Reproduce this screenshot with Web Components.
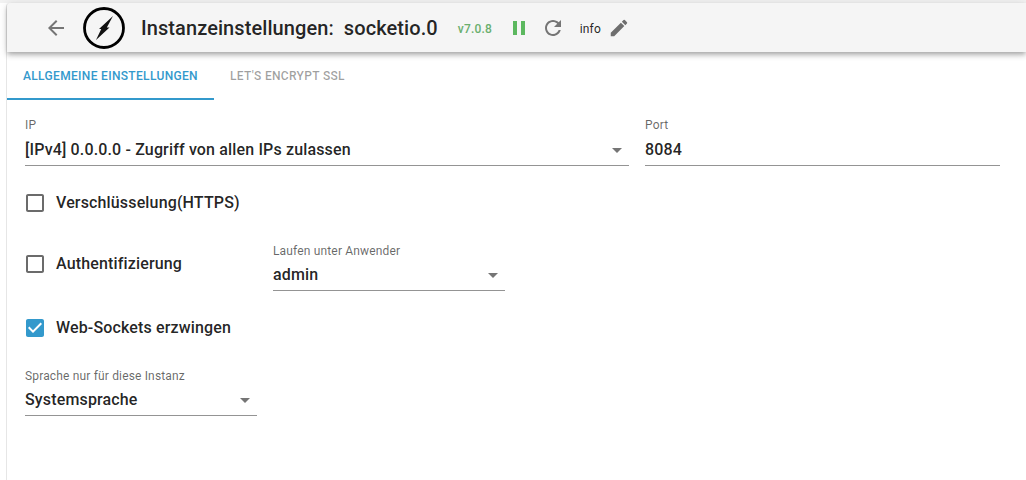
<!DOCTYPE html>
<html lang="de"><head><meta charset="utf-8"><title>Instanzeinstellungen</title>
<style>html,body{margin:0;padding:0;background:#fff;height:100%;overflow:hidden;font-family:Roboto,"Liberation Sans",sans-serif;color:rgba(0,0,0,.87)}</style>
</head><body>
<settings-page>
  <app-bar slot="bar" title-text="Instanzeinstellungen:" instance="socketio.0" version="v7.0.8" log="info"></app-bar>
  <tab-bar slot="tabs"><tab-item active>Allgemeine Einstellungen</tab-item><tab-item>Let's Encrypt SSL</tab-item></tab-bar>
  <form-row style="--gap:16px;--mt:18px;--h:48px;--lp:0px;--vm:8px">
    <select-field label="IP" value="[IPv4] 0.0.0.0 - Zugriff von allen IPs zulassen" style="width:604px"></select-field>
    <text-field label="Port" value="8084" style="width:355px"></text-field>
  </form-row>
  <form-row style="--mt:25px;--h:24px"><check-box label="Verschlüsselung(HTTPS)"></check-box></form-row>
  <form-row style="--mt:28px;--h:48px;--gap:0px">
    <check-box label="Authentifizierung" style="width:248px;margin-bottom:6px"></check-box>
    <select-field label="Laufen unter Anwender" value="admin" style="width:232px"></select-field>
  </form-row>
  <form-row style="--mt:25px;--h:24px"><check-box label="Web-Sockets erzwingen" checked></check-box></form-row>
  <form-row style="--mt:28px;--h:48px"><select-field label="Sprache nur für diese Instanz" value="Systemsprache" style="width:232px"></select-field></form-row>
</settings-page>
<script>
function def(name, html){
  customElements.define(name, class extends HTMLElement{
    connectedCallback(){
      if(this.shadowRoot) return;
      const r=this.attachShadow({mode:'open'});
      r.innerHTML=typeof html==='function'?html(this):html;
    }
  });
}
def('settings-page',`<style>
:host{display:block;height:480px;padding-top:3px;box-sizing:border-box;background:linear-gradient(#f2f2f2,#f2f2f2) top/100% 3px no-repeat #fff}
.frame{margin-left:6px;height:100%;box-sizing:border-box;border-left:1px solid #e6e6e6;border-top-left-radius:4px;display:flex;flex-direction:column}
.body{padding-left:18px;display:flex;flex-direction:column}
</style><div class="frame"><slot name="bar"></slot><slot name="tabs"></slot><div class="body"><slot></slot></div></div>`);
def('app-bar',h=>`<style>
:host{display:flex;align-items:center;height:49px;background:#f5f5f5;box-shadow:0 2px 4px -1px rgba(0,0,0,.2),0 4px 5px 0 rgba(0,0,0,.14),0 1px 10px 0 rgba(0,0,0,.12);position:relative;z-index:1;border-top-left-radius:4px;padding-left:37px;box-sizing:border-box}
svg{display:block;flex:none}
.title{font-size:20px;font-weight:500;line-height:24px;white-space:pre;margin-left:15px;letter-spacing:.08px;color:rgba(0,0,0,.87)}
.ver{font-size:12px;font-weight:500;color:#6aaf6e;margin-left:20px;letter-spacing:.2px;margin-top:2px}
.log{font-size:12px;color:rgba(0,0,0,.87);margin-left:15px;margin-top:2px;letter-spacing:.2px}
</style>
<svg width="24" height="24" viewBox="0 0 24 24" fill="#757575"><path d="M20 11H7.83l5.59-5.59L12 4l-8 8 8 8 1.41-1.41L7.83 13H20v-2z"/></svg>
<svg width="44" height="44" viewBox="0 0 44 44" style="margin-left:14px"><circle cx="22" cy="22" r="19.5" fill="none" stroke="#000" stroke-width="2.8"/><path d="M31 10 L17 23 L24 23 Z M14 34 L27.5 21.5 L20 21.5 Z" fill="#111"/></svg>
<span class="title">${h.getAttribute('title-text')}  ${h.getAttribute('instance')}</span>
<span class="ver">${h.getAttribute('version')}</span>
<svg width="24" height="24" viewBox="0 0 24 24" fill="#5cb85f" style="margin-left:14.6px"><path d="M6 5h4v14H6zM14 5h4v14h-4z"/></svg>
<svg width="24" height="24" viewBox="0 0 24 24" fill="#757575" style="margin-left:10px"><path d="M17.65 6.35C16.2 4.9 14.21 4 12 4c-4.42 0-7.99 3.58-7.99 8s3.57 8 7.99 8c3.73 0 6.84-2.55 7.73-6h-2.08c-.82 2.33-3.04 4-5.65 4-3.31 0-6-2.69-6-6s2.69-6 6-6c1.66 0 3.14.69 4.22 1.78L13 11h7V4l-2.35 2.35z"/></svg>
<span class="log">${h.getAttribute('log')}</span>
<svg width="22" height="22" viewBox="0 0 24 24" fill="#6e6e6e" style="margin-left:7px"><path d="M3 17.25V21h3.75L17.81 9.94l-3.75-3.75L3 17.25zM20.71 7.04c.39-.39.39-1.02 0-1.41l-2.34-2.34a.9959.9959 0 0 0-1.41 0l-1.83 1.83 3.75 3.75 1.83-1.83z"/></svg>`);
def('tab-bar',`<style>:host{display:flex;height:48px}</style><slot></slot>`);
def('tab-item',`<style>
:host{display:flex;align-items:center;height:48px;box-sizing:border-box;padding:0 16px;font-size:12px;font-weight:500;text-transform:uppercase;letter-spacing:.33px;color:rgba(0,0,0,.38);white-space:nowrap}
:host([active]){color:#3399cc;border-bottom:2px solid #3399cc;padding-top:2px}
</style><slot></slot>`);
def('form-row',`<style>:host{display:flex;align-items:center;gap:var(--gap,0);margin-top:var(--mt,0);height:var(--h,48px)}</style><slot></slot>`);
const fieldCss=`:host{display:block;height:48px;box-sizing:border-box;position:relative;border-bottom:1px solid #949494;flex:none}
.l{font-size:12px;line-height:14px;color:rgba(0,0,0,.6);white-space:nowrap;padding-top:var(--lp,1px);letter-spacing:.16px}
.v{font-size:16px;font-weight:500;line-height:19px;margin-top:var(--vm,7px);white-space:nowrap;letter-spacing:.15px;color:rgba(0,0,0,.87)}`;
def('select-field',h=>`<style>${fieldCss}
.a{position:absolute;right:7px;top:30px;width:0;height:0;border-left:5px solid transparent;border-right:5px solid transparent;border-top:5px solid #757575}</style>
<div class="l">${h.getAttribute('label')}</div><div class="v">${h.getAttribute('value')}</div><span class="a"></span>`);
def('text-field',h=>`<style>${fieldCss}</style><div class="l">${h.getAttribute('label')}</div><div class="v">${h.getAttribute('value')}</div>`);
def('check-box',h=>`<style>
:host{display:flex;align-items:center;height:24px;flex:none;font-size:16px;font-weight:500;letter-spacing:.15px;color:rgba(0,0,0,.87);white-space:nowrap}
svg{display:block;margin-right:9px;flex:none;margin-left:-2px}
span{margin-bottom:2px}
</style>${h.hasAttribute('checked')
?`<svg width="24" height="24" viewBox="0 0 24 24"><path fill="#3399cc" d="M19 3H5c-1.11 0-2 .9-2 2v14c0 1.1.89 2 2 2h14c1.11 0 2-.9 2-2V5c0-1.1-.89-2-2-2zm-9 14l-5-5 1.41-1.41L10 14.17l7.59-7.59L19 8l-9 9z"/></svg>`
:`<svg width="24" height="24" viewBox="0 0 24 24"><path fill="#6b6b6b" d="M19 5v14H5V5h14m0-2H5c-1.1 0-2 .9-2 2v14c0 1.1.9 2 2 2h14c1.1 0 2-.9 2-2V5c0-1.1-.9-2-2-2z"/></svg>`}<span>${h.getAttribute('label')}</span>`);
</script></body></html>
